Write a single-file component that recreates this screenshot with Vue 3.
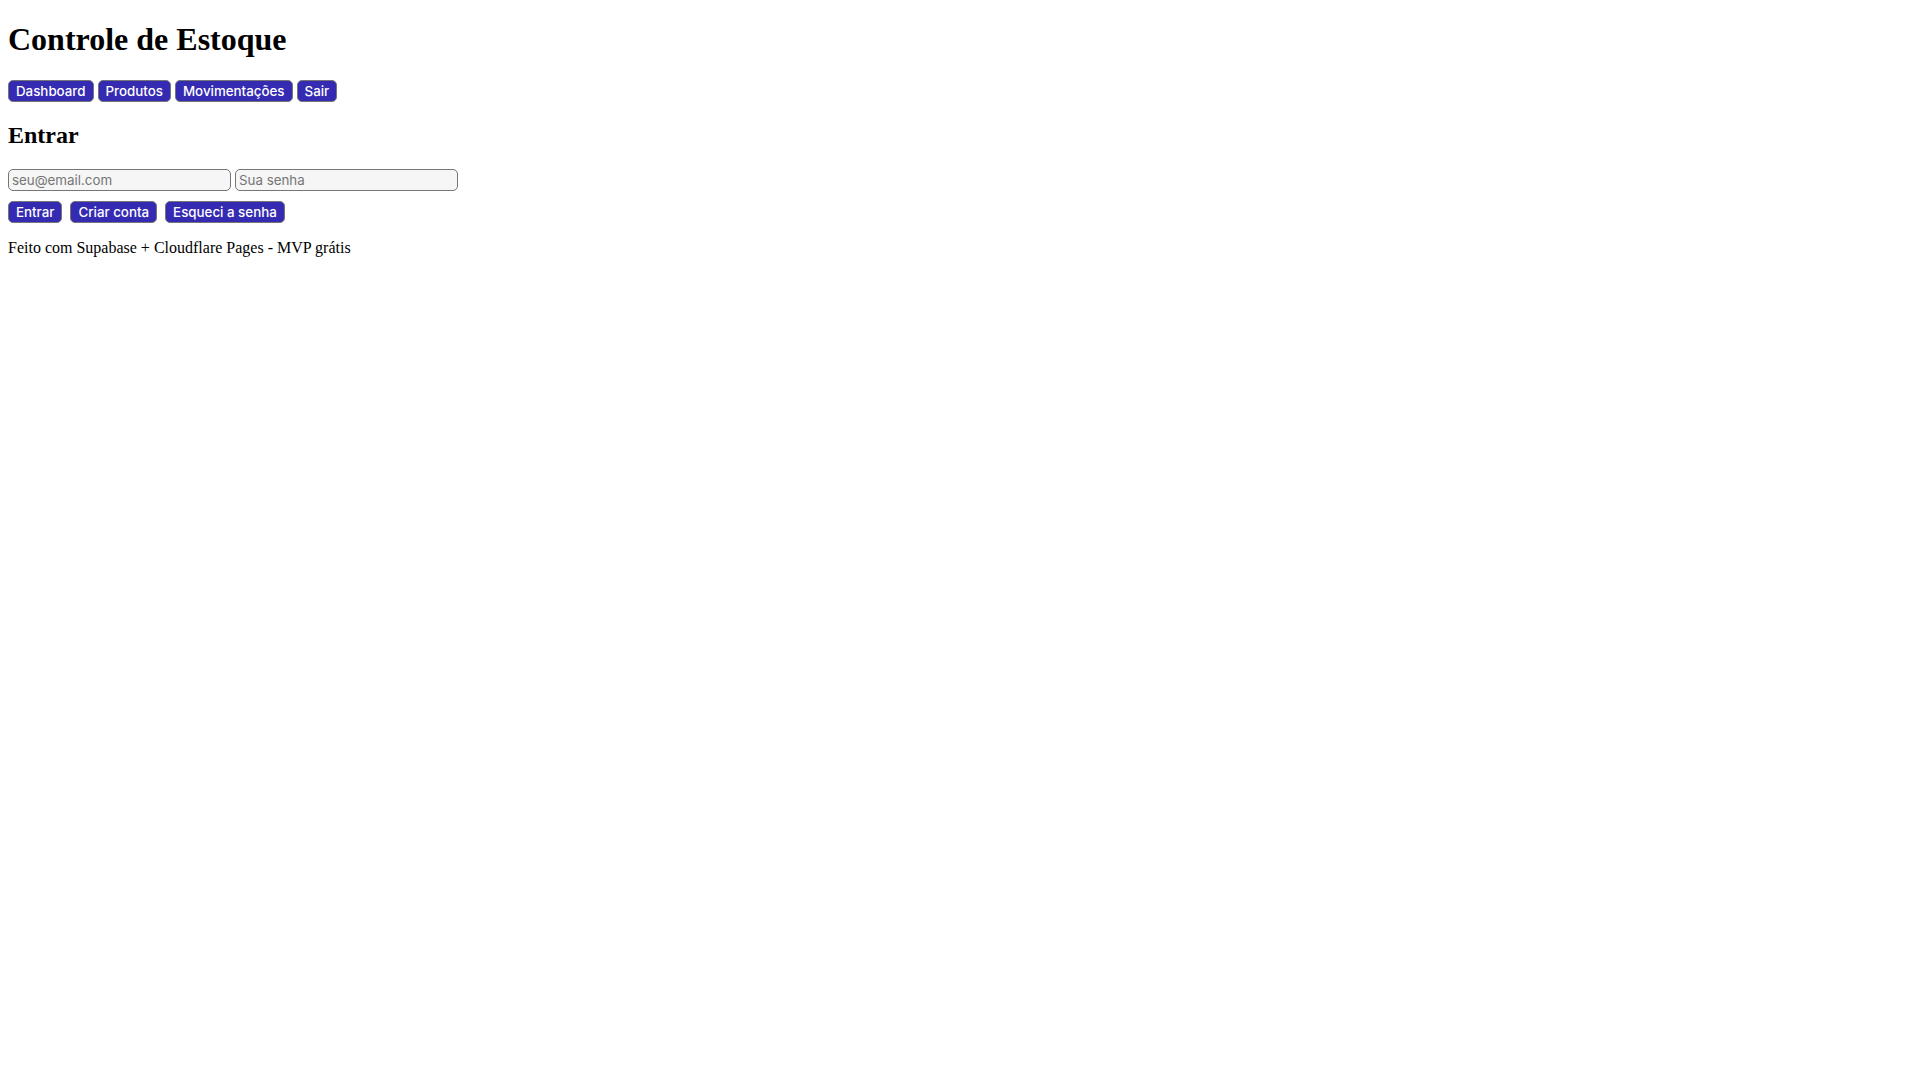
<template>
  <div class="page">
    <header>
      <h1>Controle de Estoque</h1>
      <nav class="menu">
        <button v-for="item in menu" :key="item" type="button">{{ item }}</button>
      </nav>
    </header>

    <main>
      <h2>Entrar</h2>
      <form @submit.prevent>
        <!-- Credentials -->
        <div class="fields">
          <input v-model="email" type="email" placeholder="seu@email.com" aria-label="E-mail" />
          <input v-model="password" type="password" placeholder="Sua senha" aria-label="Senha" />
        </div>

        <!-- Actions -->
        <div class="actions">
          <button type="submit">Entrar</button>
          <button type="button">Criar conta</button>
          <button type="button">Esqueci a senha</button>
        </div>
      </form>
    </main>

    <footer>
      <p>Feito com Supabase + Cloudflare Pages - MVP grátis</p>
    </footer>
  </div>
</template>

<script setup>
import { ref } from 'vue';

const menu = ['Dashboard', 'Produtos', 'Movimentações', 'Sair'];

const email = ref('');
const password = ref('');
</script>

<style>
body {
  margin: 0;
  background: #fff;
}
</style>

<style scoped>
.page {
  padding: 0 8px;
  display: flow-root;
  color: #000;
  font-family: "Liberation Serif", serif;
  font-size: 16px;
}

h1 {
  margin: 21px 0 22px;
  font-size: 32px;
  line-height: 37px;
}

h2 {
  margin: 20px 0;
  font-size: 24px;
  line-height: 27px;
}

/* Rows of controls */
.menu,
.fields {
  display: flex;
  flex-wrap: wrap;
  gap: 4px;
}

.actions {
  display: flex;
  flex-wrap: wrap;
  gap: 8px;
  margin-top: 10px;
}

button,
input {
  box-sizing: border-box;
  height: 22px;
  border: 1px solid #767676;
  border-radius: 5px;
  font-family: Inter, sans-serif;
  line-height: 16px;
}

button {
  padding: 0 7px;
  background: #352ab2;
  color: #fff;
  font-weight: 500;
}

input {
  width: 223px;
  padding: 0 3px;
  background: #f6f6f6;
}

input::placeholder {
  color: #757575;
}

p {
  margin: 16px 0;
  line-height: 18px;
}
</style>
